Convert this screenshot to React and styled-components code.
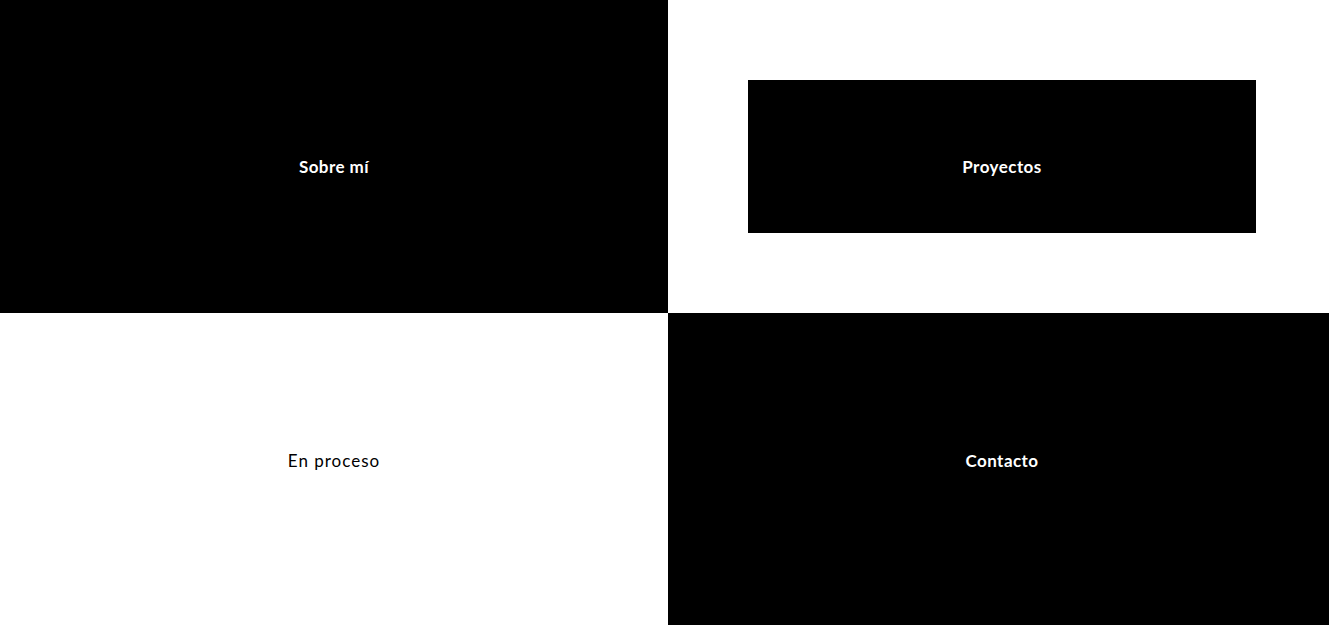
import React from "react";
import styled, { createGlobalStyle } from "styled-components";

const Global = createGlobalStyle`
  html, body { margin: 0; padding: 0; overflow: hidden; background: #fff; }
  body { font-family: Lato, "Open Sans", sans-serif; }
`;

const Grid = styled.div`
  display: grid;
  grid-template-columns: 668px 668px;
  grid-template-rows: 313px 312px;
  width: 1336px;
  height: 625px;
`;

const Cell = styled.div`
  display: flex;
  align-items: center;
  justify-content: center;
  background: ${(p) => (p.$dark ? "#000" : "#fff")};
  color: ${(p) => (p.$dark ? "#fff" : "#000")};
  padding: ${(p) => p.$pad || "0"};
  box-sizing: border-box;
`;

const Box = styled.div`
  flex: 1;
  align-self: stretch;
  display: flex;
  align-items: center;
  justify-content: center;
  background: #000;
  color: #fff;
  padding-top: 20px;
`;

const Label = styled.span`
  font-size: 17px;
  font-weight: ${(p) => (p.$bold ? 700 : 400)};
  letter-spacing: ${(p) => (p.$bold ? "0.45px" : "1px")};
  line-height: 1;
`;

export default function App() {
  return (
    <>
      <Global />
      <Grid>
        <Cell $dark $pad="20px 0 0 0">
          <Label $bold>Sobre mí</Label>
        </Cell>
        <Cell $pad="80px 80px 80px 80px">
          <Box>
            <Label $bold>Proyectos</Label>
          </Box>
        </Cell>
        <Cell $pad="0 0 18px 0">
          <Label>En proceso</Label>
        </Cell>
        <Cell $dark $pad="0 0 18px 0">
          <Label $bold>Contacto</Label>
        </Cell>
      </Grid>
    </>
  );
}
